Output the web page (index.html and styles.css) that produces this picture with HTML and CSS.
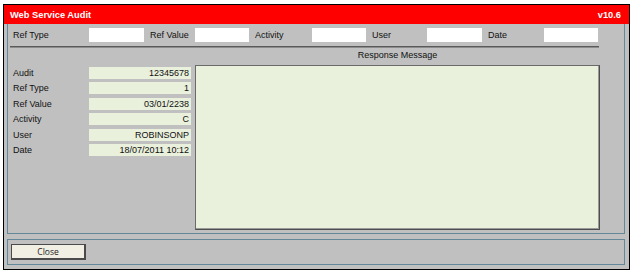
FILE: index.html
```html
<!DOCTYPE html>
<html lang="en">
<head>
  <meta charset="UTF-8" />
  <title>Web Service Audit</title>
  <link rel="stylesheet" href="styles.css">
</head>
<body>

  <div class="window">
    <div class="titlebar">
      <span class="title">Web Service Audit</span>
      <span class="version">v10.6</span>
    </div>

    <div class="window-body">
      <div class="panel main-panel">

        <div class="filters">
          <label class="filter-label first">Ref Type</label>
          <input type="text" class="filter-input" />
          <label class="filter-label">Ref Value</label>
          <input type="text" class="filter-input" />
          <label class="filter-label">Activity</label>
          <input type="text" class="filter-input" />
          <label class="filter-label">User</label>
          <input type="text" class="filter-input" />
          <label class="filter-label">Date</label>
          <input type="text" class="filter-input" />
        </div>

        <div class="rule"></div>

        <div class="content">
          <div class="details">
            <div class="detail-row">
              <span class="detail-label">Audit</span>
              <span class="detail-value">12345678</span>
            </div>
            <div class="detail-row">
              <span class="detail-label">Ref Type</span>
              <span class="detail-value">1</span>
            </div>
            <div class="detail-row">
              <span class="detail-label">Ref Value</span>
              <span class="detail-value">03/01/2238</span>
            </div>
            <div class="detail-row">
              <span class="detail-label">Activity</span>
              <span class="detail-value">C</span>
            </div>
            <div class="detail-row">
              <span class="detail-label">User</span>
              <span class="detail-value">ROBINSONP</span>
            </div>
            <div class="detail-row">
              <span class="detail-label">Date</span>
              <span class="detail-value">18/07/2011 10:12</span>
            </div>
          </div>

          <div class="response">
            <div class="response-title">Response Message</div>
            <div class="response-box"></div>
          </div>
        </div>

      </div>

      <div class="panel footer-panel">
        <button class="close-btn">Close</button>
      </div>
    </div>
  </div>

</body>
</html>
```

FILE: styles.css
```css
body {
  margin: 0;
  padding: 4px 0 0 3px;
  background: #ffffff;
  font-family: 'Liberation Sans', Arial, sans-serif;
  font-size: 9px;
  color: #111;
}

.window {
  width: 625px;
  height: 264px;
  border: 1px solid #000;
  background: #c0c0c0;
  display: flex;
  flex-direction: column;
}

.titlebar {
  height: 19px;
  background: #ff0000;
  color: #fff;
  font-weight: bold;
  font-size: 9.3px;
  display: flex;
  align-items: center;
  justify-content: space-between;
  padding: 0 8px 0 6px;
}

.window-body {
  padding: 0 4px 0 3px;
  display: flex;
  flex-direction: column;
  gap: 5px;
}

.panel {
  border: 1px solid #62889a;
}

/* main panel has no top edge, it sits under the title bar */
.main-panel {
  border-top: none;
  height: 209px;
  padding: 4px 2px 3px 2px;
  box-sizing: border-box;
  height: 210px;
}

.filters {
  display: grid;
  grid-template-columns: 79px 55px 51px 54px 63px 54px 61px 55px 62px 54px;
  align-items: center;
  height: 14px;
}

.filter-label {
  padding-left: 6px;
  white-space: nowrap;
}

.filter-label.first {
  padding-left: 3px;
}

.filter-input {
  height: 14px;
  margin: 0;
  padding: 0;
  border: none;
  background: #fff;
  box-sizing: border-box;
  width: 100%;
}

.rule {
  margin-top: 4px;
  height: 0;
  width: 589px;
  border-top: 1px solid #5a5a5a;
  border-bottom: 1px solid #8c8c8c;
}

.content {
  display: flex;
  gap: 4px;
}

.details {
  width: 181px;
  padding-top: 19px;
  display: flex;
  flex-direction: column;
  gap: 3.4px;
}

.detail-row {
  display: grid;
  grid-template-columns: 79px 102px;
  align-items: center;
  height: 12px;
}

.detail-label {
  padding-left: 3px;
}

.detail-value {
  height: 12px;
  line-height: 12px;
  background: #e9f0dc;
  text-align: right;
  padding-right: 2px;
}

.response {
  width: 405px;
}

.response-title {
  height: 14px;
  line-height: 14px;
  padding-bottom: 3px;
  text-align: center;
}

.response-box {
  height: 165px;
  box-sizing: border-box;
  background: #e9f0dc;
  border: 1px solid #6a6a6a;
  border-right-color: #4e4e4e;
  border-bottom-color: #4e4e4e;
  box-shadow: inset -1px -1px 0 #9a9a9a;
}

.footer-panel {
  height: 26px;
  box-sizing: border-box;
  padding: 4px 0 0 3px;
}

.close-btn {
  display: block;
  width: 75px;
  height: 16px;
  margin: 0;
  padding: 0;
  font-family: 'Open Sans', 'Liberation Sans', sans-serif;
  font-size: 8.5px;
  color: #222;
  background: #f1eee3;
  border: 1px solid #4a4a4a;
  border-right-width: 2px;
  border-bottom-width: 2px;
  cursor: pointer;
}
```
